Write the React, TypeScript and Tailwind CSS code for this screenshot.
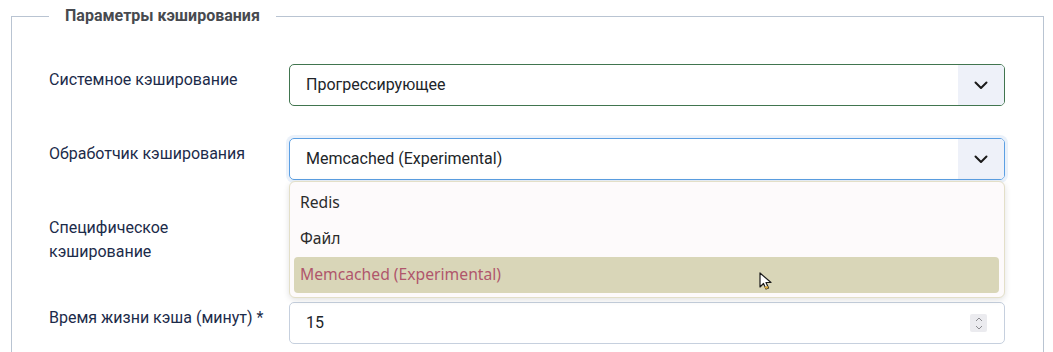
import React from 'react';

const Chevron = () => (
  <svg width="14" height="9" viewBox="0 0 14 9" fill="none">
    <path d="M1.5 1.5 L7 7 L12.5 1.5" stroke="#1a1a1a" strokeWidth="2" strokeLinecap="round" strokeLinejoin="round" />
  </svg>
);

const Label = ({ children }: { children: React.ReactNode }) => (
  <div className="w-[240px] shrink-0 pt-[4px] pr-6 text-[16px] leading-6 text-[#1c2b4a]">{children}</div>
);

const SelectBox = ({ value, border }: { value: string; border: string }) => (
  <div className={`flex h-[42px] flex-1 items-stretch overflow-hidden rounded-[5px] border bg-white ${border}`}>
    <div className="flex flex-1 items-center pl-4 text-[16px] text-[#212529]">{value}</div>
    <div className="flex w-[46px] items-center justify-center bg-[#eef1f9]">
      <Chevron />
    </div>
  </div>
);

export default function App() {
  return (
    <div className="h-[352px] overflow-hidden bg-white pt-[5px] pl-[11px] pr-[9px] font-['Roboto',sans-serif]">
      <fieldset className="relative h-[400px] border border-[#b9c4d2] pl-[37px] pr-[38px]">
        <legend className="px-4 text-[16px] font-bold leading-[22px] text-[#474a4f]">Параметры кэширования</legend>

        <div className="mt-[37px] flex flex-col gap-[32px]">
          <div className="flex">
            <Label>Системное кэширование</Label>
            <SelectBox value="Прогрессирующее" border="border-[#41754f]" />
          </div>

          <div className="relative flex">
            <Label>Обработчик кэширования</Label>
            <div className="flex flex-1 rounded-[5px] shadow-[0_0_0_3px_rgba(140,180,230,0.18)]">
              <SelectBox value="Memcached (Experimental)" border="border-[#5b9fe3]" />
            </div>

            <div className="absolute left-[240px] right-0 top-[43px] z-10 rounded-[6px] border border-[#e3dfc8] bg-[#fdfafb] px-[4px] pt-[3px] pb-[4px] font-['Noto_Sans',sans-serif] text-[15.7px] shadow-[0_2px_6px_rgba(0,0,0,0.12)]">
              <div className="flex h-[36px] items-center pl-[6px] text-[#2b2b2b]">Redis</div>
              <div className="flex h-[36px] items-center pl-[6px] text-[#2b2b2b]">Файл</div>
              <div className="relative mr-[1px] flex h-[36px] items-center rounded-[4px] bg-[#d9d6b8] pl-[6px] text-[#b0566c]">
                Memcached (Experimental)
                <svg className="absolute left-[465px] top-[15px]" width="16" height="20" viewBox="0 0 16 20">
                  <path d="M1 1 L1 15 L4.5 11.5 L7 17 L9.5 16 L7 10.5 L12 10.5 Z" fill="#ffffff" stroke="#1a1a1a" strokeWidth="1.2" strokeLinejoin="round" />
                  <path d="M5 15 L7 17 L9.5 16 L8.5 14 Z" fill="#d8a93a" />
                </svg>
              </div>
            </div>
          </div>

          <div className="flex">
            <Label>
              Специфическое
              <br />
              кэширование
            </Label>
            <div className="h-[58px] flex-1 rounded-[5px] border border-[#c6d0de]" />
          </div>

          <div className="flex">
            <Label>Время жизни кэша (минут) *</Label>
            <div className="flex h-[42px] flex-1 items-center rounded-[5px] border border-[#c6d0de] bg-white pl-4 pr-[17px] text-[16px] text-[#212529]">
              <span className="flex-1">15</span>
              <div className="flex h-[18px] w-[17px] flex-col items-center justify-center gap-[3px] rounded-[2px] bg-[#ebebef]">
                <svg width="8" height="5" viewBox="0 0 8 5"><path d="M1 4 L4 1 L7 4" stroke="#8a8a8f" strokeWidth="1" fill="none" /></svg>
                <svg width="8" height="5" viewBox="0 0 8 5"><path d="M1 1 L4 4 L7 1" stroke="#8a8a8f" strokeWidth="1" fill="none" /></svg>
              </div>
            </div>
          </div>
        </div>
      </fieldset>
    </div>
  );
}
